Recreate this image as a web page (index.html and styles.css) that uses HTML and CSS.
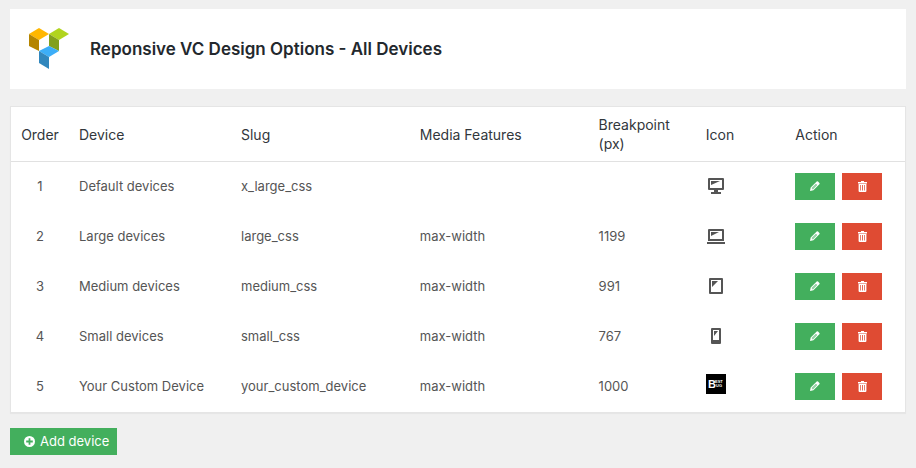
FILE: index.html
```html
<!DOCTYPE html>
<html lang="en">
<head>
  <meta charset="UTF-8" />
  <meta name="viewport" content="width=device-width, initial-scale=1" />
  <title>Reponsive VC Design Options - All Devices</title>
  <link rel="stylesheet" href="styles.css">
</head>
<body>

  <!-- Icon sprite -->
  <svg class="sprite" aria-hidden="true">
    <symbol id="i-edit" viewBox="0 0 10 10">
      <path fill="currentColor" fill-rule="evenodd" d="M0 10 L.7 6.6 L6.7 .6 Q7.3 0 8 .6 L9.4 2 Q10 2.7 9.4 3.3 L3.4 9.3 Z M1.6 7.1 L2.9 8.4 L7.2 4.1 L5.9 2.8 Z" />
      <path fill="currentColor" opacity=".45" d="M1.6 7.1 L2.9 8.4 L7.2 4.1 L5.9 2.8 Z" />
    </symbol>
    <symbol id="i-trash" viewBox="0 0 9 11">
      <path fill="currentColor" fill-rule="evenodd" d="M3 0H6V1H9V2.4H0V1H3Z M.6 3H8.4V10Q8.4 11 7.4 11H1.6Q.6 11 .6 10Z M2 4V9.6H2.7V4Z M4.1 4V9.6H4.9V4Z M6.3 4V9.6H7V4Z" />
    </symbol>
  </svg>

  <!-- Page header -->
  <header class="page-header">
    <svg class="logo" viewBox="0 0 40 41" aria-hidden="true">
      <path fill="#ffb700" d="M0 5 10 -1 20 5 10 11Z" />
      <path fill="#b58500" d="M0 5 10 11V22L0 17Z" />
      <path fill="#b1d41e" d="M20 5 30 -1 40 5 30 11Z" />
      <path fill="#82a01c" d="M20 5 30 11V22L20 17Z" />
      <path fill="#3caef8" d="M10 22 20 17 30 22 20 28Z" />
      <path fill="#3187bd" d="M10 22 20 28V40L10 34Z" />
    </svg>
    <h1>Reponsive VC Design Options - All Devices</h1>
  </header>

  <!-- Devices -->
  <table class="devices">
    <thead>
      <tr>
        <th class="col-order" scope="col">Order</th>
        <th class="col-device" scope="col">Device</th>
        <th class="col-slug" scope="col">Slug</th>
        <th class="col-media" scope="col">Media Features</th>
        <th class="col-breakpoint" scope="col">Breakpoint (px)</th>
        <th class="col-icon" scope="col">Icon</th>
        <th class="col-action" scope="col">Action</th>
      </tr>
    </thead>
    <tbody>
      <tr>
        <td class="col-order">1</td>
        <td>Default devices</td>
        <td>x_large_css</td>
        <td></td>
        <td></td>
        <td>
          <svg class="device-icon" viewBox="0 0 20 20" aria-hidden="true">
            <path fill="#555" fill-rule="evenodd" d="M3 2H17Q18 2 18 3V13Q18 14 17 14H12V16H15V18H5V16H8V14H3Q2 14 2 13V3Q2 2 3 2Z M4 4V12H16V4Z M5 5H14L5 9Z" />
          </svg>
        </td>
        <td>
          <div class="actions">
            <button class="btn btn-edit" type="button" aria-label="Edit"><svg><use href="#i-edit" /></svg></button>
            <button class="btn btn-delete" type="button" aria-label="Delete"><svg><use href="#i-trash" /></svg></button>
          </div>
        </td>
      </tr>
      <tr>
        <td class="col-order">2</td>
        <td>Large devices</td>
        <td>large_css</td>
        <td>max-width</td>
        <td>1199</td>
        <td>
          <svg class="device-icon" viewBox="0 0 20 20" aria-hidden="true">
            <path fill="#555" fill-rule="evenodd" d="M3 3H17Q18 3 18 4V15H2V4Q2 3 3 3Z M4 5V13H16V5Z M5 6H13L5 10Z M1 16H19V18H1Z" />
          </svg>
        </td>
        <td>
          <div class="actions">
            <button class="btn btn-edit" type="button" aria-label="Edit"><svg><use href="#i-edit" /></svg></button>
            <button class="btn btn-delete" type="button" aria-label="Delete"><svg><use href="#i-trash" /></svg></button>
          </div>
        </td>
      </tr>
      <tr>
        <td class="col-order">3</td>
        <td>Medium devices</td>
        <td>medium_css</td>
        <td>max-width</td>
        <td>991</td>
        <td>
          <svg class="device-icon" viewBox="0 0 20 20" aria-hidden="true">
            <path fill="#555" fill-rule="evenodd" d="M4 2H16Q17 2 17 3V17Q17 18 16 18H4Q3 18 3 17V3Q3 2 4 2Z M5 4V16H15V4Z M6 5H12L6 11Z" />
          </svg>
        </td>
        <td>
          <div class="actions">
            <button class="btn btn-edit" type="button" aria-label="Edit"><svg><use href="#i-edit" /></svg></button>
            <button class="btn btn-delete" type="button" aria-label="Delete"><svg><use href="#i-trash" /></svg></button>
          </div>
        </td>
      </tr>
      <tr>
        <td class="col-order">4</td>
        <td>Small devices</td>
        <td>small_css</td>
        <td>max-width</td>
        <td>767</td>
        <td>
          <svg class="device-icon" viewBox="0 0 20 20" aria-hidden="true">
            <path fill="#555" fill-rule="evenodd" d="M6 2H14Q15 2 15 3V17Q15 18 14 18H6Q5 18 5 17V3Q5 2 6 2Z M7 4V14H13V4Z M8 5H12L8 10Z" />
          </svg>
        </td>
        <td>
          <div class="actions">
            <button class="btn btn-edit" type="button" aria-label="Edit"><svg><use href="#i-edit" /></svg></button>
            <button class="btn btn-delete" type="button" aria-label="Delete"><svg><use href="#i-trash" /></svg></button>
          </div>
        </td>
      </tr>
      <tr>
        <td class="col-order">5</td>
        <td>Your Custom Device</td>
        <td>your_custom_device</td>
        <td>max-width</td>
        <td>1000</td>
        <td>
          <svg class="device-icon device-image" viewBox="0 0 20 20" role="img" aria-label="Best Bug">
            <rect width="20" height="20" fill="#000" />
            <text class="mark-big" x="2" y="14">B</text>
            <text class="mark-small" x="9" y="9">EST</text>
            <text class="mark-small" x="10" y="13">UG</text>
          </svg>
        </td>
        <td>
          <div class="actions">
            <button class="btn btn-edit" type="button" aria-label="Edit"><svg><use href="#i-edit" /></svg></button>
            <button class="btn btn-delete" type="button" aria-label="Delete"><svg><use href="#i-trash" /></svg></button>
          </div>
        </td>
      </tr>
    </tbody>
  </table>

  <button class="btn btn-add" type="button">
    <svg viewBox="0 0 10 10" aria-hidden="true">
      <path fill="currentColor" fill-rule="evenodd" d="M5 0A5 5 0 0 1 5 10A5 5 0 0 1 5 0Z M4.200 2V4.200H2V5.800H4.200V8H5.800V5.800H8V4.200H5.800V2Z" />
    </svg>
    Add device
  </button>

</body>
</html>
```

FILE: styles.css
```css
* {
  box-sizing: border-box;
}

body {
  margin: 0;
  padding: 9px 10px 13px;
  background: #f0f0f0;
  color: #555;
  font-family: Inter, "Liberation Sans", sans-serif;
  font-size: 13px;
  line-height: 19px;
}

.sprite {
  display: none;
}

.page-header {
  display: flex;
  align-items: center;
  gap: 21px;
  height: 80px;
  padding: 0 19px;
  margin-bottom: 17px;
  background: #fff;
}

.page-header h1 {
  margin: 0;
  color: #23282d;
  font-size: 17px;
  font-weight: 600;
  line-height: 24px;
}

.logo {
  width: 40px;
  height: 41px;
  overflow: visible;
}

.devices {
  width: 100%;
  margin-bottom: 15px;
  table-layout: fixed;
  border: 1px solid #e5e5e5;
  border-spacing: 0;
  background: #fff;
  box-shadow: 0 1px 1px rgba(0, 0, 0, 0.04);
}

.devices th {
  padding: 8px 10px;
  border-bottom: 1px solid #e1e1e1;
  color: #32373c;
  font-size: 14px;
  font-weight: 400;
  text-align: left;
  vertical-align: middle;
}

.devices td {
  height: 50px;
  padding: 0 10px 2px;
  vertical-align: middle;
}

.devices .col-order {
  width: 58px;
  text-align: center;
}

.col-device {
  width: 162px;
}

.col-slug,
.col-media {
  width: 20%;
}

.col-breakpoint {
  width: 12%;
}

.col-icon {
  width: 10%;
}

.device-icon {
  display: block;
  width: 20px;
  height: 20px;
}

.device-image {
  margin-bottom: 4px;
}

.mark-big,
.mark-small {
  fill: #fff;
  font-family: "Liberation Sans", sans-serif;
  font-weight: bold;
}

.mark-big {
  font-size: 11px;
}

.mark-small {
  font-size: 4px;
}

.actions {
  display: flex;
  gap: 7px;
}

.btn {
  display: flex;
  align-items: center;
  justify-content: center;
  width: 40px;
  height: 27px;
  padding: 0;
  border: 0;
  color: #fff;
  font: inherit;
  cursor: pointer;
}

.btn-edit,
.btn-add {
  background: #43af5d;
}

.btn-edit svg {
  width: 10px;
  height: 10px;
}

.btn-delete {
  background: #df4b33;
}

.btn-delete svg {
  width: 9px;
  height: 11px;
}

.btn-add {
  gap: 5px;
  width: auto;
  padding: 0 8px 0 14px;
}

.btn-add svg {
  width: 11px;
  height: 11px;
}
```
